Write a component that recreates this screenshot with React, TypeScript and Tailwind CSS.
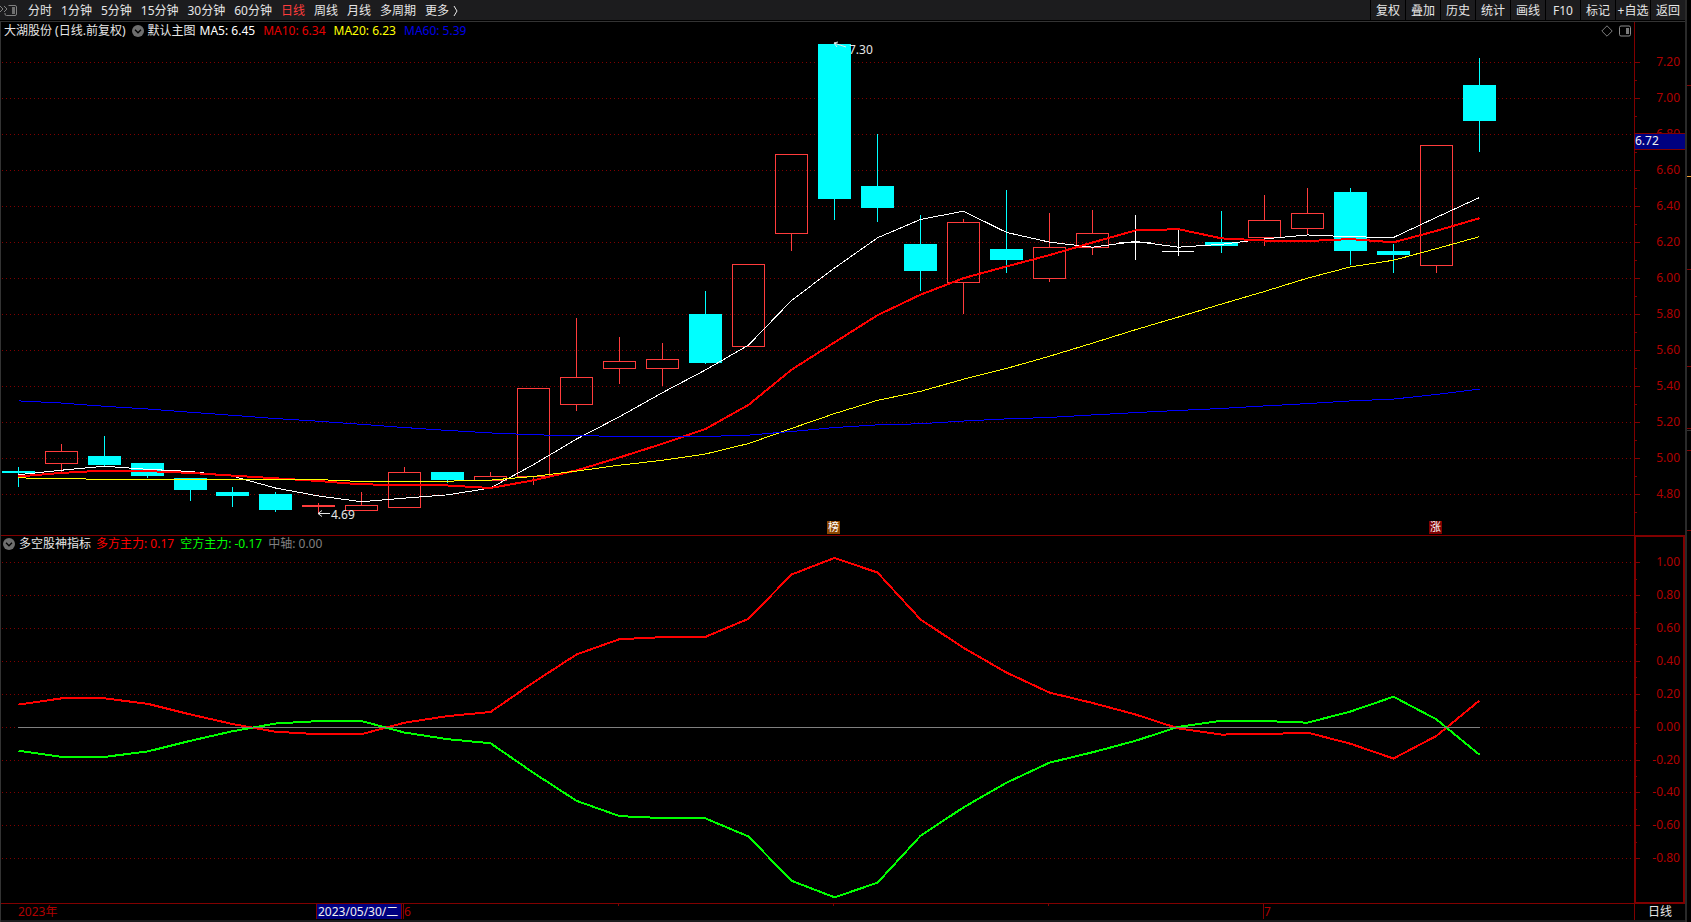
import { ReactNode, useLayoutEffect, useRef, useState } from "react";

type Candle = [open: number, high: number, low: number, close: number];
type Size = { w: number; h: number };

const AXIS_WIDTH = 51;
const SLOTS = 38;
const HEADER = 18;

const UP = "#ff3c3c";
const DOWN = "#00ffff";
const FLAT = "#ffffff";
const LINE = "#800000";
const LABEL = "#b00000";

const PERIODS = [
  "分时",
  "1分钟",
  "5分钟",
  "15分钟",
  "30分钟",
  "60分钟",
  "日线",
  "周线",
  "月线",
  "多周期",
];

const ACTIONS = [
  "复权",
  "叠加",
  "历史",
  "统计",
  "画线",
  "F10",
  "标记",
  "+自选",
  "返回",
];

const CANDLES: Candle[] = [
  [4.93, 4.95, 4.84, 4.92],
  [4.97, 5.08, 4.92, 5.04],
  [5.01, 5.12, 4.95, 4.96],
  [4.97, 4.97, 4.89, 4.9],
  [4.89, 4.89, 4.76, 4.82],
  [4.81, 4.84, 4.73, 4.79],
  [4.8, 4.81, 4.7, 4.71],
  [4.73, 4.75, 4.69, 4.74],
  [4.71, 4.81, 4.71, 4.74],
  [4.73, 4.95, 4.73, 4.92],
  [4.92, 4.92, 4.86, 4.88],
  [4.88, 4.92, 4.88, 4.9],
  [4.9, 5.39, 4.85, 5.39],
  [5.3, 5.78, 5.26, 5.45],
  [5.5, 5.67, 5.41, 5.54],
  [5.5, 5.64, 5.4, 5.55],
  [5.8, 5.93, 5.52, 5.53],
  [5.62, 6.08, 5.62, 6.08],
  [6.25, 6.69, 6.15, 6.69],
  [7.3, 7.3, 6.32, 6.44],
  [6.51, 6.8, 6.31, 6.39],
  [6.19, 6.35, 5.93, 6.04],
  [5.98, 6.33, 5.8, 6.31],
  [6.16, 6.49, 6.03, 6.1],
  [6.0, 6.36, 5.98, 6.17],
  [6.17, 6.38, 6.13, 6.25],
  [6.2, 6.35, 6.1, 6.2],
  [6.15, 6.27, 6.12, 6.15],
  [6.2, 6.37, 6.14, 6.18],
  [6.23, 6.46, 6.18, 6.32],
  [6.28, 6.5, 6.24, 6.36],
  [6.48, 6.5, 6.07, 6.15],
  [6.15, 6.19, 6.03, 6.13],
  [6.07, 6.74, 6.03, 6.74],
  [7.07, 7.22, 6.7, 6.87],
];

// averages whose window starts before the first visible candle
const MA5_HEAD = [4.91, 4.935, 4.957, 4.94];
const MA10_HEAD = [4.9, 4.92, 4.933, 4.93, 4.92, 4.905, 4.89, 4.875, 4.856];
const MA20_HEAD = [
  4.892, 4.89, 4.883, 4.883, 4.883, 4.883, 4.883, 4.883, 4.872, 4.872, 4.874,
  4.88, 4.9, 4.93, 4.963, 4.99, 5.025, 5.083, 5.167,
];
const MA60 = [
  5.32, 5.308, 5.29, 5.275, 5.257, 5.24, 5.222, 5.207, 5.19, 5.172, 5.156,
  5.142, 5.132, 5.126, 5.124, 5.122, 5.122, 5.13, 5.15, 5.172, 5.187, 5.193,
  5.208, 5.22, 5.228, 5.242, 5.255, 5.267, 5.278, 5.292, 5.305, 5.32, 5.33,
  5.356, 5.386,
];

const FORCE = [
  0.14, 0.178, 0.178, 0.145, 0.08, 0.022, -0.025, -0.04, -0.04, 0.03, 0.07,
  0.095, 0.275, 0.445, 0.538, 0.55, 0.552, 0.662, 0.931, 1.032, 0.943, 0.658,
  0.485, 0.335, 0.213, 0.15, 0.08, -0.005, -0.042, -0.04, -0.03, -0.098,
  -0.188, -0.05, 0.165,
];

const SIDE_MARKS = [
  { y: 85, color: LINE },
  { y: 176, color: "#f0a030" },
  { y: 269, color: LINE },
  { y: 366, color: LINE },
  { y: 428, color: LINE },
  { y: 430, color: "#333333" },
  { y: 450, color: LINE },
  { y: 530, color: LINE },
];

const movingAverage = (n: number, head: number[]) =>
  CANDLES.map((_, i) =>
    i < n - 1
      ? head[i]
      : CANDLES.slice(i - n + 1, i + 1).reduce((sum, c) => sum + c[3], 0) / n
  );

const MA5 = movingAverage(5, MA5_HEAD);
const MA10 = movingAverage(10, MA10_HEAD);
const MA20 = movingAverage(20, MA20_HEAD);

const range = (from: number, to: number, step: number) =>
  Array.from(
    { length: Math.round((to - from) / step) + 1 },
    (_, i) => from + i * step
  );

const columnX = (plotWidth: number, i: number) =>
  Math.floor((i + 0.3984) * (plotWidth / SLOTS));

const useSize = () => {
  const ref = useRef<HTMLDivElement>(null);
  const [size, setSize] = useState<Size>({ w: 0, h: 0 });

  useLayoutEffect(() => {
    const el = ref.current;
    if (el == null) return;
    const measure = () => setSize({ w: el.clientWidth, h: el.clientHeight });
    measure();
    const observer = new ResizeObserver(measure);
    observer.observe(el);
    return () => observer.disconnect();
  }, []);

  return { ref, size };
};

const Canvas = ({
  label,
  draw,
}: {
  label: string;
  draw: (size: Size) => ReactNode;
}) => {
  const { ref, size } = useSize();
  return (
    <div ref={ref} className="h-full w-full">
      {size.w > 0 && (
        <svg
          role="img"
          aria-label={label}
          width={size.w}
          height={size.h}
          className="block overflow-visible text-xs"
          shapeRendering="crispEdges"
        >
          {draw(size)}
        </svg>
      )}
    </div>
  );
};

const Axis = ({
  size,
  ticks,
  minor,
  toY,
}: {
  size: Size;
  ticks: number[];
  minor: number[];
  toY: (v: number) => number;
}) => {
  const plot = size.w - AXIS_WIDTH;
  return (
    <g>
      {ticks.map((v) => {
        const y = Math.floor(toY(v) + 0.01) + 0.5;
        return (
          <g key={v}>
            <line
              x1={1}
              x2={plot}
              y1={y}
              y2={y}
              stroke={LINE}
              strokeDasharray="1 3"
            />
            <line x1={plot} x2={plot + 6} y1={y} y2={y} stroke={LINE} />
            <text x={size.w - 5} y={y + 3.5} textAnchor="end" fill={LABEL}>
              {(Math.round(v * 100) / 100 || 0).toFixed(2)}
            </text>
          </g>
        );
      })}
      {minor.map((v) => {
        const y = Math.floor(toY(v) + 0.01) + 0.5;
        return (
          <line key={v} x1={plot} x2={plot + 3} y1={y} y2={y} stroke={LINE} />
        );
      })}
      <line x1={plot + 0.5} x2={plot + 0.5} y1={0} y2={size.h} stroke={LINE} />
    </g>
  );
};

const Curve = ({
  values,
  plot,
  toY,
  color,
  width = 1,
}: {
  values: number[];
  plot: number;
  toY: (v: number) => number;
  color: string;
  width?: number;
}) => (
  <polyline
    points={values
      .map((v, i) => `${columnX(plot, i) + 0.5},${toY(v) + 0.5}`)
      .join(" ")}
    fill="none"
    stroke={color}
    strokeWidth={width}
  />
);

const CandleShape = ({
  candle: [open, high, low, close],
  x,
  toY,
}: {
  candle: Candle;
  x: number;
  toY: (v: number) => number;
}) => {
  const y = (v: number) => Math.round(toY(v));
  const top = y(Math.max(open, close));
  const bottom = y(Math.min(open, close));
  const cx = x + 0.5;

  if (open === close) {
    return (
      <g stroke={FLAT}>
        <line x1={cx} x2={cx} y1={y(high)} y2={y(low)} />
        <line x1={x - 16} x2={x + 16} y1={top + 0.5} y2={top + 0.5} />
      </g>
    );
  }
  if (close < open) {
    return (
      <g>
        <line x1={cx} x2={cx} y1={y(high)} y2={y(low)} stroke={DOWN} />
        <rect
          x={x - 16}
          y={top}
          width={33}
          height={Math.max(bottom - top, 2)}
          fill={DOWN}
        />
      </g>
    );
  }
  return (
    <g stroke={UP} fill="none">
      <line x1={cx} x2={cx} y1={y(high)} y2={top} />
      <line x1={cx} x2={cx} y1={bottom} y2={y(low)} />
      {bottom - top <= 2 ? (
        <rect x={x - 16} y={top} width={33} height={2} fill={UP} stroke="none" />
      ) : (
        <rect x={x - 15.5} y={top + 0.5} width={32} height={bottom - top} />
      )}
    </g>
  );
};

const Marker = ({
  x,
  y,
  text,
  color,
}: {
  x: number;
  y: number;
  text: string;
  color: string;
}) => (
  <g>
    <rect x={x} y={y} width={13} height={13} fill={color} />
    <text x={x + 1} y={y + 10} fontSize={11} fill="#ffffff">
      {text}
    </text>
  </g>
);

const drawPrice = (size: Size) => {
  const plot = size.w - AXIS_WIDTH;
  const toY = (v: number) =>
    HEADER + ((7.32222 - v) / 2.75) * (size.h - HEADER);
  const at = (i: number) => columnX(plot, i);
  const peak = Math.floor(toY(7.3));
  const trough = Math.floor(toY(4.69));
  const tag = Math.round(toY(6.72)) - 15;

  return (
    <>
      <Axis
        size={size}
        ticks={range(4.8, 7.2, 0.2)}
        minor={range(4.7, 7.1, 0.2)}
        toY={toY}
      />
      {CANDLES.map((candle, i) => (
        <CandleShape key={i} candle={candle} x={at(i)} toY={toY} />
      ))}
      <Curve values={MA5} plot={plot} toY={toY} color="#ffffff" />
      <Curve values={MA10} plot={plot} toY={toY} color="#ff0000" width={2} />
      <Curve values={MA20} plot={plot} toY={toY} color="#ffff00" />
      <Curve values={MA60} plot={plot} toY={toY} color="#0000ff" />

      <g stroke="#e6e6e6" fill="none" shapeRendering="auto">
        <path
          d={`M${at(19)} ${peak} l12 4 M${at(19)} ${peak} l4 -1 M${at(
            19
          )} ${peak} l3 4`}
        />
        <path
          d={`M${at(7)} ${trough + 0.5} h12 M${at(7)} ${
            trough + 0.5
          } l4 -3 M${at(7)} ${trough + 0.5} l4 3`}
        />
      </g>
      <text x={at(19) + 15} y={peak + 11} fill="#e6e6e6">
        7.30
      </text>
      <text x={at(7) + 13} y={trough + 6} fill="#e6e6e6">
        4.69
      </text>

      <Marker x={at(19) - 7} y={size.h - 14} text="榜" color="#8c4600" />
      <Marker x={at(33) - 7} y={size.h - 14} text="涨" color="#800000" />

      <rect
        x={plot + 1}
        y={tag}
        width={AXIS_WIDTH - 1}
        height={17}
        fill={LINE}
      />
      <rect
        x={plot + 1}
        y={tag + 1}
        width={AXIS_WIDTH - 1}
        height={15}
        fill="#000080"
      />
      <text x={plot + 1} y={tag + 12} fill="#f0f0f0">
        6.72
      </text>
    </>
  );
};

const drawForce = (size: Size) => {
  const plot = size.w - AXIS_WIDTH;
  const toY = (v: number) =>
    HEADER + ((1.05278 - v) / 2.12222) * (size.h - HEADER);
  const zero = Math.floor(toY(0)) + 0.5;

  return (
    <>
      <Axis
        size={size}
        ticks={range(-0.8, 1, 0.2)}
        minor={range(-0.7, 0.9, 0.2)}
        toY={toY}
      />
      <rect
        x={plot + 1}
        y={0}
        width={AXIS_WIDTH - 2}
        height={size.h}
        fill="none"
        stroke={LINE}
        strokeWidth={2}
      />
      <Curve values={FORCE} plot={plot} toY={toY} color="#ff0000" width={2} />
      <Curve
        values={FORCE.map((v) => -v)}
        plot={plot}
        toY={toY}
        color="#00ff00"
        width={2}
      />
      <line
        x1={columnX(plot, 0)}
        x2={columnX(plot, 34) + 1}
        y1={zero}
        y2={zero}
        stroke="#808080"
      />
    </>
  );
};

const drawTime = (size: Size) => {
  const at = (i: number) => columnX(size.w, i);
  return (
    <>
      <text x={at(0)} y={12} fill={LABEL}>
        2023年
      </text>
      <rect x={at(7) - 2} y={0} width={86} height={15} fill={LINE} />
      <rect x={at(7) - 1} y={0} width={84} height={15} fill="#000080" />
      <text x={at(7)} y={12} fill="#f0f0f0">
        2023/05/30/二
      </text>
      <g stroke={LINE}>
        <line x1={at(9) - 0.5} x2={at(9) - 0.5} y1={0} y2={15} />
        <line x1={at(29) - 0.5} x2={at(29) - 0.5} y1={0} y2={15} />
        {[14, 19, 24].map((i) => (
          <line key={i} x1={at(i) - 0.5} x2={at(i) - 0.5} y1={0} y2={2} />
        ))}
      </g>
      <text x={at(9)} y={12} fill={LABEL}>
        6
      </text>
      <text x={at(29)} y={12} fill={LABEL}>
        7
      </text>
    </>
  );
};

const MenuButton = ({ label }: { label: string }) => (
  <button type="button" aria-label={label} className="h-3 w-3 shrink-0">
    <svg viewBox="0 0 12 12" className="block h-3 w-3">
      <circle cx="6" cy="6" r="6" fill="#6e6e6e" />
      <path d="M3 4.8 6 7.8 9 4.8" fill="none" stroke="#000" strokeWidth="1.3" />
    </svg>
  </button>
);

const App = () => {
  const [period, setPeriod] = useState("日线");

  return (
    <div className="flex h-screen overflow-hidden bg-black font-['Noto_Sans','Noto_Sans_CJK_SC',sans-serif] text-xs text-[#e6e6e6]">
      <div className="flex min-w-0 flex-1 flex-col">
        {/* Toolbar */}
        <header className="flex h-5 shrink-0 items-stretch justify-between bg-[#1c1c1e] leading-[22px]">
          <nav className="flex h-[22px] items-center gap-[9px] whitespace-nowrap">
            <button type="button" aria-label="侧栏" className="h-4 w-[19px]">
              <svg viewBox="0 0 19 16" className="block h-4 w-[19px]">
                <g fill="none" stroke="#808080">
                  <path d="M0 3 3 6 0 9M4 3 7 6 4 9" />
                  <path d="M8.5 2.5H15a1.500 1.500 0 0 1 1.500 1.500V11a1.500 1.500 0 0 1-1.500 1.500H6.500a1.500 1.500 0 0 1-1.500-1.500V10" />
                </g>
                <rect x="12" y="4" width="3" height="7" fill="#6e6e6e" />
              </svg>
            </button>
            {PERIODS.map((name) => (
              <button
                key={name}
                type="button"
                onClick={() => setPeriod(name)}
                className={name === period ? "text-[#ff3c3c]" : ""}
              >
                {name}
              </button>
            ))}
            <button type="button" className="flex items-center gap-1">
              更多
              <svg viewBox="0 0 6 12" className="h-3 w-[6px]">
                <path d="M1 1 4 6 1 11" fill="none" stroke="#e6e6e6" />
              </svg>
            </button>
          </nav>
          <div className="flex">
            {ACTIONS.map((name) => (
              <button
                key={name}
                type="button"
                className="w-[35px] overflow-hidden border-l border-black text-center whitespace-nowrap"
              >
                {name}
              </button>
            ))}
          </div>
        </header>

        <main className="mt-px flex min-h-0 flex-1 flex-col border-t border-l border-[#333333]">
          {/* Price panel */}
          <section className="relative min-h-0 flex-[514] border-b border-[#800000]">
            <Canvas label="大湖股份 日线" draw={drawPrice} />
            <div className="absolute top-0 right-[54px] left-[3px] flex h-[18px] items-center justify-between whitespace-nowrap">
              <div className="flex items-center">
                <span>大湖股份 (日线.前复权)</span>
                <span className="ml-[6px] flex items-center gap-1">
                  <MenuButton label="主图指标" />
                  默认主图
                </span>
                <span className="ml-1 flex gap-2">
                  <span className="text-white">MA5: 6.45</span>
                  <span className="text-[#e60000]">MA10: 6.34</span>
                  <span className="text-[#ffff00]">MA20: 6.23</span>
                  <span className="text-[#0000e6]">MA60: 5.39</span>
                </span>
              </div>
              <div className="flex items-center gap-[6px]">
                <button type="button" aria-label="标记点">
                  <svg viewBox="0 0 12 12" className="block h-3 w-3">
                    <path
                      d="M6 .8 11.200 6 6 11.200 .8 6Z"
                      fill="none"
                      stroke="#8c8c8c"
                      strokeWidth=".9"
                    />
                  </svg>
                </button>
                <button type="button" aria-label="分栏">
                  <svg viewBox="0 0 12 12" className="block h-3 w-3">
                    <rect
                      x=".5"
                      y="1"
                      width="11"
                      height="10"
                      rx="1.500"
                      fill="none"
                      stroke="#8c8c8c"
                    />
                    <rect x="7" y="3" width="3" height="6" fill="#7a7a7a" />
                  </svg>
                </button>
              </div>
            </div>
          </section>

          {/* Indicator panel */}
          <section className="relative min-h-0 flex-[367]">
            <Canvas label="多空股神指标" draw={drawForce} />
            <div className="absolute top-0 left-[2px] flex h-4 items-center gap-1 whitespace-nowrap">
              <MenuButton label="副图指标" />
              <span>多空股神指标</span>
              <span className="ml-px flex gap-[6px]">
                <span className="text-[#ff0000]">多方主力: 0.17</span>
                <span className="text-[#00ff00]">空方主力: -0.17</span>
                <span className="text-[#808080]">中轴: 0.00</span>
              </span>
            </div>
          </section>

          {/* Time axis */}
          <div className="flex h-[17px] shrink-0 border-t border-[#800000]">
            <div className="min-w-0 flex-1">
              <Canvas label="时间轴" draw={drawTime} />
            </div>
            <button
              type="button"
              className="w-[51px] border-l border-[#800000] leading-4"
            >
              {period}
            </button>
          </div>
          <div className="h-[2px] shrink-0 bg-[#1c1c1e]" />
        </main>
      </div>

      {/* Edge of the quote list */}
      <div className="w-[6px] shrink-0 border-l-2 border-[#2a2a2a]">
        <svg className="block h-full w-full" shapeRendering="crispEdges">
          {SIDE_MARKS.map(({ y, color }) => (
            <rect key={y} x={0} y={y} width={4} height={1} fill={color} />
          ))}
        </svg>
      </div>
    </div>
  );
};

export default App;
